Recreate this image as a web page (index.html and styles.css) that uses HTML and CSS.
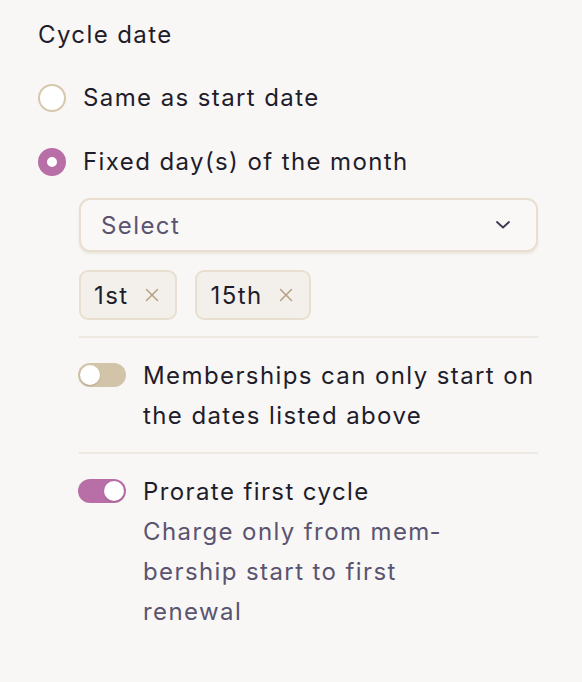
FILE: index.html
```html
<!DOCTYPE html>
<html lang="en">
<head>
<meta charset="utf-8">
<link rel="stylesheet" href="styles.css">
</head>
<body>
<div class="panel">
  <div class="title">Cycle date</div>
  <div class="options">
    <label class="radio-row">
      <span class="radio"></span>
      <span class="radio-label">Same as start date</span>
    </label>
    <label class="radio-row">
      <span class="radio checked"></span>
      <span class="radio-label">Fixed day(s) of the month</span>
    </label>
  </div>
  <div class="sub">
    <div class="select">
      <span class="select-text">Select</span>
      <svg class="chev" width="14" height="8" viewBox="0 0 14 8"><path d="M1 1 L7 6.5 L13 1" fill="none" stroke="#3a3550" stroke-width="1.8" stroke-linecap="round" stroke-linejoin="round"/></svg>
    </div>
    <div class="chips">
      <span class="chip"><span class="chip-text">1st</span><svg class="x" width="14" height="14" viewBox="0 0 14 14"><path d="M1.5 1.5 L12.5 12.5 M12.5 1.5 L1.5 12.5" stroke="#b5a080" stroke-width="1.5" stroke-linecap="round"/></svg></span>
      <span class="chip"><span class="chip-text">15th</span><svg class="x" width="14" height="14" viewBox="0 0 14 14"><path d="M1.5 1.5 L12.5 12.5 M12.5 1.5 L1.5 12.5" stroke="#b5a080" stroke-width="1.5" stroke-linecap="round"/></svg></span>
    </div>
    <div class="toggle-row">
      <span class="toggle"><span class="knob"></span></span>
      <div class="toggle-text">
        <div class="toggle-label wide">Memberships can only start on the dates listed above</div>
      </div>
    </div>
    <div class="toggle-row">
      <span class="toggle on"><span class="knob"></span></span>
      <div class="toggle-text">
        <div class="toggle-label">Prorate first cycle</div>
        <div class="toggle-desc">Charge only from mem&shy;bership start to first renewal</div>
      </div>
    </div>
  </div>
</div>
</body>
</html>
```
FILE: styles.css
```css
html, body {
  margin: 0;
  padding: 0;
  background: #f8f7f5;
}
body {
  font-family: "Inter", "Open Sans", sans-serif;
  color: #1f1d2b;
  font-size: 24px;
  letter-spacing: 1.4px;
}
.panel {
  padding: 18px 44px 40px 38px;
}
.title {
  line-height: 34px;
  margin-bottom: 30px;
}
.options {
  display: flex;
  flex-direction: column;
  gap: 32px;
}
.radio-row {
  display: flex;
  align-items: center;
  gap: 17px;
  line-height: 32px;
}
.radio {
  width: 24px;
  height: 24px;
  border-radius: 50%;
  border: 2px solid #d6c8ad;
  background: #fff;
  box-sizing: content-box;
  flex: none;
}
.radio.checked {
  width: 10px;
  height: 10px;
  border: 9px solid #b86fa8;
  background: #fff;
}
.sub {
  margin-left: 41px;
  margin-top: 20px;
}
.select {
  height: 54px;
  box-sizing: border-box;
  border: 2px solid #e8dfd0;
  border-radius: 11px;
  background: #f9f8f6;
  box-shadow: 0 2px 2px rgba(180, 160, 130, 0.18);
  display: flex;
  align-items: center;
  justify-content: space-between;
  padding: 0 26px 0 20px;
}
.select-text {
  color: #5a5470;
}
.chev {
  display: block;
}
.chips {
  display: flex;
  gap: 18px;
  margin-top: 18px;
  padding-bottom: 16px;
  border-bottom: 2px solid #ede8e1;
}
.chip {
  display: inline-flex;
  align-items: center;
  gap: 17px;
  height: 50px;
  box-sizing: border-box;
  padding: 0 16px 0 13px;
  background: #f3f0eb;
  border: 2px solid #e8dfd0;
  border-radius: 9px;
}
.x {
  display: block;
}
.toggle-row {
  display: flex;
  gap: 17px;
  padding: 18px 0 16px;
}
.toggle-row + .toggle-row {
  border-top: 2px solid #ede8e1;
}
.toggle {
  flex: none;
  width: 48px;
  height: 24px;
  border-radius: 12px;
  background: #d2c4a8;
  position: relative;
  margin-top: 7px;
  margin-left: -1px;
}
.knob {
  position: absolute;
  top: 2px;
  left: 2px;
  width: 20px;
  height: 20px;
  border-radius: 50%;
  background: #fff;
  box-shadow: 0 1px 2px rgba(0,0,0,0.15);
}
.toggle.on {
  background: #b86fa8;
}
.toggle.on .knob {
  left: 26px;
}
.toggle-text {
  flex: 1;
  min-width: 0;
  line-height: 40px;
}
.toggle-label.wide {
  margin-right: -10px;
}
.toggle-desc {
  color: #5a5470;
  max-width: 320px;
  hyphens: manual;
}
```
